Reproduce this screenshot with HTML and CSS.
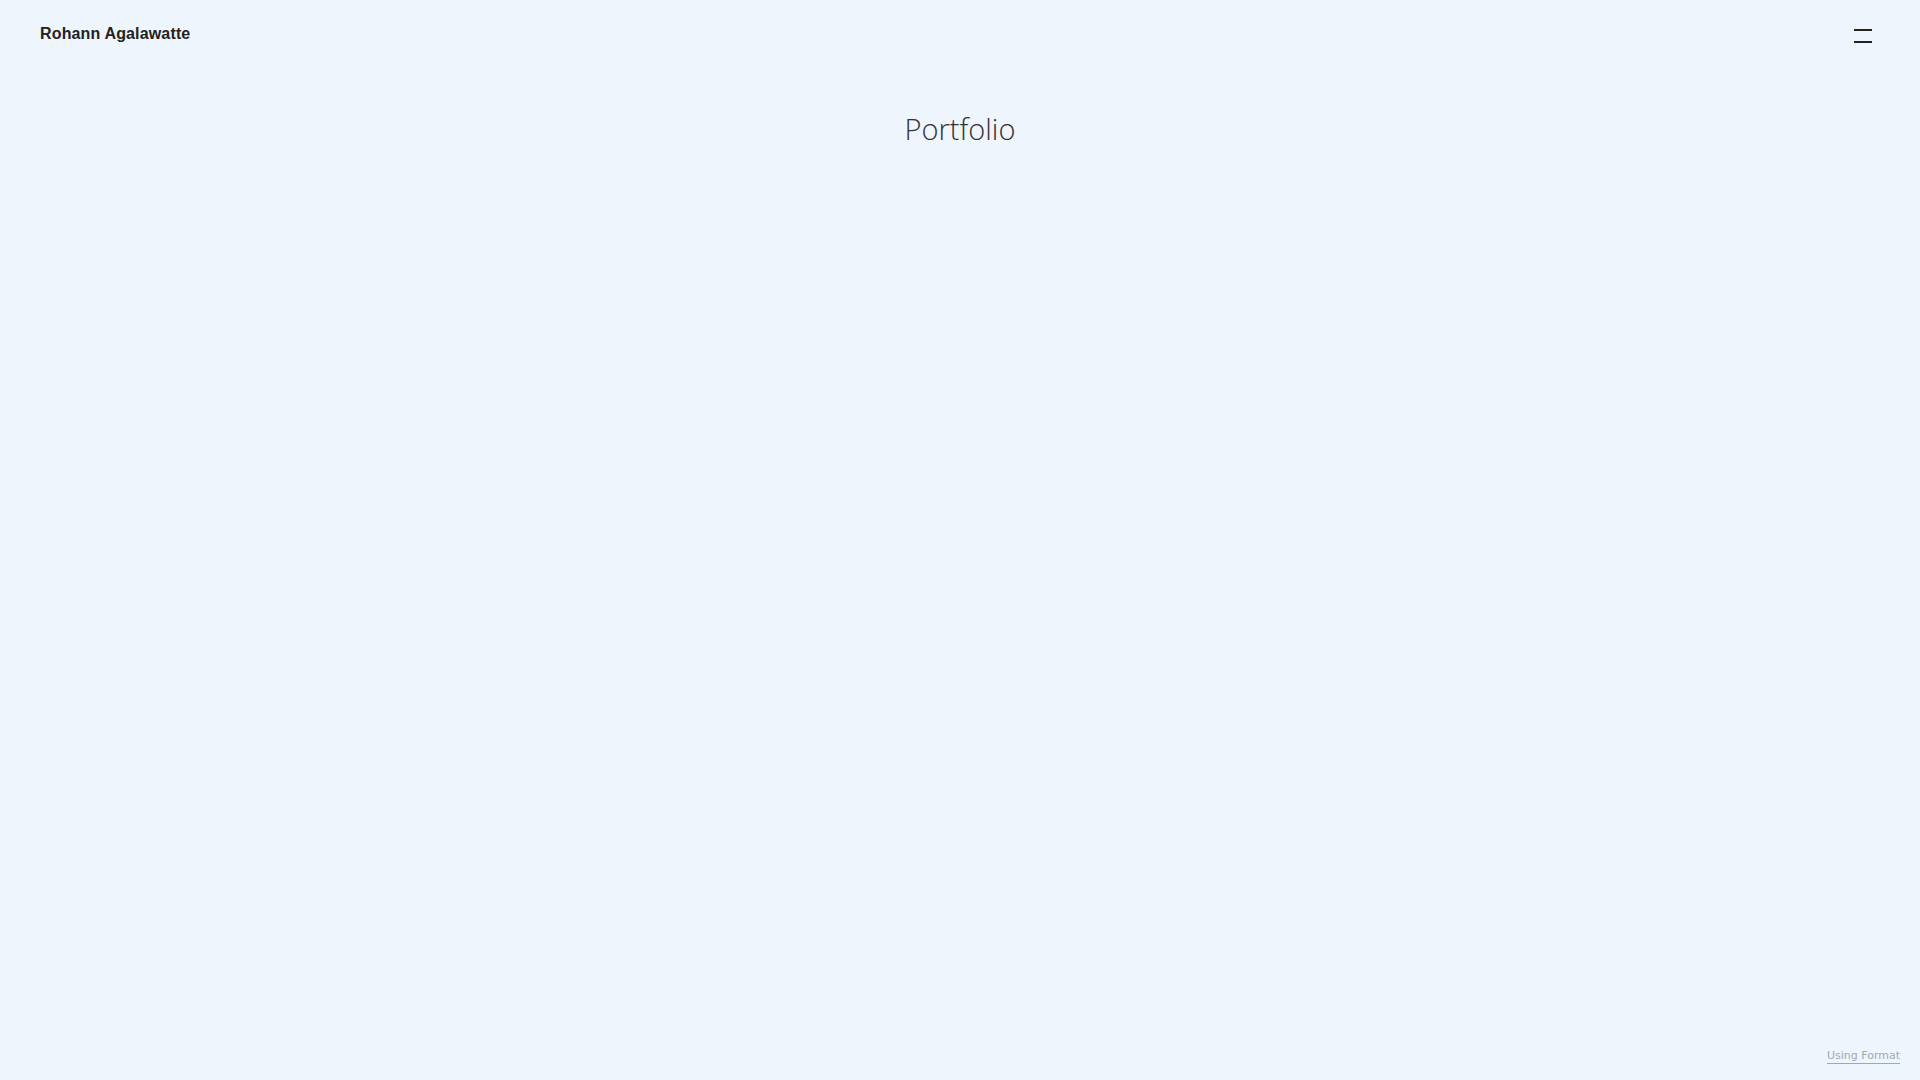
FILE: index.html
```html
<!DOCTYPE html>
<html lang="en">
<head>
    <meta charset="UTF-8">
    <meta name="viewport" content="width=device-width, initial-scale=1.0">
    <title>Portfolio - Rohann Agalawatte</title>
    <link rel="stylesheet" href="styles.css">
</head>
<body>

<header class="site-header">
    <a class="site-title" href="#">Rohann Agalawatte</a>
    <button class="menu-toggle" aria-label="Menu">
        <span></span>
        <span></span>
    </button>
</header>

<main class="page">
    <h1 class="page-title">Portfolio</h1>
</main>

<a class="made-with" href="#">Using Format</a>

</body>
</html>
```

FILE: styles.css
```css
html, body {
    height: 100%;
}

body {
    margin: 0;
    background-color: #eef5fc;
    color: #222;
    font-family: "Liberation Sans", Arial, sans-serif;
    display: flex;
    flex-direction: column;
}

.site-header {
    display: flex;
    justify-content: space-between;
    align-items: flex-start;
    padding: 25px 48px 0 40px;
}

.site-title {
    font-size: 16px;
    font-weight: bold;
    color: #222;
    text-decoration: none;
    letter-spacing: 0.15px;
}

.menu-toggle {
    background: none;
    border: none;
    padding: 0;
    margin-top: 4px;
    width: 18px;
    cursor: pointer;
    display: flex;
    flex-direction: column;
    gap: 10px;
}

.menu-toggle span {
    display: block;
    height: 2px;
    background-color: #222;
}

.page {
    flex: 1;
    text-align: center;
}

.page-title {
    margin: 66px 0 0;
    font-family: "Open Sans", sans-serif;
    font-weight: 300;
    font-size: 29px;
    color: #333;
}

/* ссылка внизу справа */
.made-with {
    align-self: flex-end;
    margin: 0 20px 16px 0;
    font-family: "DejaVu Sans", sans-serif;
    font-size: 11px;
    color: #a2a9ae;
    text-decoration: none;
    border-bottom: 1px solid #a2a9ae;
    padding-bottom: 1px;
}
```
